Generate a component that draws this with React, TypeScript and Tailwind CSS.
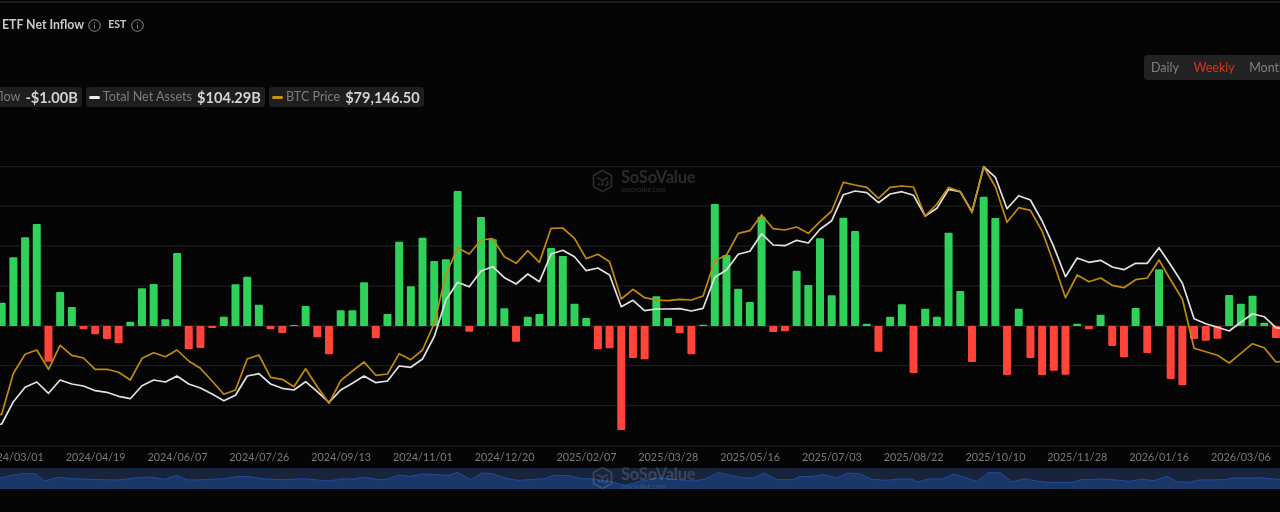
import React from 'react';

// chart values are read in 3x units, measured from the top of the chart (y = 160)
const barEnds = [
  428, 292, 232, 192, 605, 396, 441, 508, 523, 537, 550, 485, 385, 372, 478, 279, 568, 564, 504, 470, 373, 350, 434, 508, 519, 495, 438, 532, 583, 451, 451, 367, 535, 462, 245, 379, 233,
  303, 298, 93, 515, 171, 238, 445, 545, 470, 462, 264, 288, 431, 474, 568, 565, 810, 594, 598, 409, 474, 519, 583, 494, 132, 285, 386, 426, 170, 516, 514, 332, 375, 235, 406, 173, 213,
  491, 575, 470, 433, 639, 446, 470, 218, 393, 606, 110, 174, 645, 446, 594, 645, 632, 644, 491, 508, 464, 558, 592, 444, 579, 328, 657, 676, 537, 542, 536, 405, 431, 407, 488, 534,
];

const gold = [
  763, 640, 583, 570, 628, 556, 586, 594, 628, 628, 637, 660, 595, 578, 590, 570, 603, 625, 663, 703, 690, 597, 585, 652, 658, 680, 626, 680, 730, 662, 633, 606, 646, 642, 581, 599, 570,
  490, 345, 263, 282, 240, 236, 290, 310, 272, 307, 205, 204, 235, 296, 283, 305, 417, 388, 413, 420, 422, 418, 420, 408, 302, 285, 220, 212, 165, 206, 210, 201, 220, 185, 153, 67, 75,
  82, 115, 82, 78, 81, 168, 132, 82, 95, 158, 20, 80, 187, 143, 151, 213, 310, 413, 345, 365, 354, 376, 383, 359, 354, 300, 360, 418, 565, 575, 586, 609, 580, 551, 563, 606,
];

const white = [
  792, 725, 682, 666, 700, 660, 672, 678, 692, 697, 709, 716, 677, 660, 666, 648, 672, 684, 702, 722, 706, 648, 641, 672, 685, 690, 665, 695, 727, 690, 670, 648, 668, 663, 618, 622, 597,
  530, 420, 367, 380, 333, 320, 353, 372, 342, 365, 282, 271, 290, 332, 324, 345, 440, 421, 452, 447, 447, 446, 453, 445, 352, 330, 283, 274, 221, 255, 257, 241, 249, 208, 182, 104, 93,
  98, 128, 102, 95, 106, 168, 145, 88, 95, 155, 20, 52, 146, 107, 120, 183, 260, 350, 294, 307, 301, 321, 329, 310, 310, 263, 315, 370, 476, 491, 502, 513, 487, 461, 470, 503,
];

const barX = (i: number) => 1.7 + 11.69 * i;
// the series carries on past both edges of the picture
const toLine = (vals: number[], before: number, after: number) => {
  const pts = vals.map((v, i) => `${barX(i).toFixed(1)},${(v / 3).toFixed(1)}`);
  return [`-8,${before / 3}`, ...pts, `1288,${after / 3}`].join(' ');
};

const gridLines = [20, 138, 258, 378, 617, 737, 858];

const dates = [
  '2024/03/01', '2024/04/19', '2024/06/07', '2024/07/26', '2024/09/13', '2024/11/01', '2024/12/20', '2025/02/07',
  '2025/03/28', '2025/05/16', '2025/07/03', '2025/08/22', '2025/10/10', '2025/11/28', '2026/01/16', '2026/03/06',
];

// minimap outline: x in px, y in 3x units from y = 440
const mini: [number, number][] = [
  [0, 115], [14, 106], [22, 102], [35, 102], [45, 124], [57, 113], [78, 118], [118, 121], [135, 115], [151, 112], [165, 119], [176, 107], [188, 121], [204, 120], [224, 117], [239, 110], [249, 111], [265, 118], [286, 120], [304, 117], [329, 124], [341, 118], [355, 118], [363, 112], [378, 120], [388, 118], [398, 106], [410, 110], [422, 103], [449, 107], [457, 98], [471, 120], [482, 100], [492, 102], [506, 116], [518, 122], [545, 117], [553, 107], [569, 108], [580, 116], [592, 118], [608, 124], [625, 137], [640, 125],
  [658, 115], [677, 120], [693, 124], [705, 118], [718, 99], [728, 105], [742, 114], [754, 115], [764, 100], [777, 120], [793, 120], [799, 111], [811, 110], [824, 105], [836, 115], [848, 100], [860, 103], [871, 118], [885, 122], [901, 118], [911, 118], [918, 127], [928, 118], [942, 118], [954, 103], [977, 125], [989, 98], [1001, 100], [1012, 127], [1024, 117], [1038, 125], [1048, 128], [1073, 128], [1081, 120], [1105, 118], [1130, 125], [1142, 118], [1154, 123], [1167, 110], [1177, 126], [1189, 128], [1199, 121], [1224, 120], [1236, 114], [1248, 115], [1260, 114], [1280, 120],
];
const miniLine = mini.map(([x, y]) => `${x},${(y - 85) / 3}`).join(' ');

function InfoIcon() {
  return (
    <svg width="13" height="13" viewBox="0 0 13 13" fill="none" stroke="#8a8a8a" strokeWidth="1">
      <circle cx="6.5" cy="6.5" r="5.8" />
      <path d="M6.5 5.6v3.8M6.5 3.4v1" />
    </svg>
  );
}

function Watermark() {
  return (
    <div className="flex items-center gap-[8px] text-white/15">
      <svg width="21" height="24" viewBox="0 0 21 24" fill="none" stroke="currentColor" strokeWidth="1.8">
        <path d="M10.5 1.5l9 5v11l-9 5-9-5v-11z" />
        <path d="M5 8.5l5.500 3 5.500-3M10.500 11.500v5.500M6 14.500l2.500 1.500M15.500 11.500v4l-2.500 1.500" />
      </svg>
      <div className="flex flex-col">
        <span className="text-[16.5px] font-bold leading-[17px] tracking-[-0.2px]">SoSoValue</span>
        <span className="text-[7px] leading-[7px]">sosovalue.com</span>
      </div>
    </div>
  );
}

function LegendChip({ swatch, label, value }: { swatch?: string; label: string; value: string }) {
  return (
    <div className="flex h-[20px] items-center rounded-[3px] bg-[#1e1e1e] pl-[3px] pr-[4px] pt-[1px]">
      {swatch && <span className={`mr-[3px] h-[3px] w-[11px] rounded-full ${swatch}`} />}
      <span className="text-[12.6px] text-[#7d7d7d]">{label}</span>
      <span className="ml-[5px] text-[14.6px] font-bold text-[#d4d4d4]">{value}</span>
    </div>
  );
}

export default function App() {
  return (
    <div className="relative flex h-[512px] w-[1280px] flex-col overflow-hidden bg-[#050505] blur-[0.5px] font-['Lato','Liberation_Sans',sans-serif]">
      <div className="mt-[1px] h-[2px] w-full bg-[#1c1c1c]" />

      {/* Title */}
      <div className="mt-[14px] flex h-[16px] items-center pl-[2px]">
        <span className="text-[12.3px] font-bold text-[#c9c9c9]">ETF Net Inflow</span>
        <span className="ml-[4px]"><InfoIcon /></span>
        <span className="ml-[7px] text-[10.5px] font-bold text-[#c9c9c9]">EST</span>
        <span className="ml-[5px]"><InfoIcon /></span>
      </div>

      {/* Period tabs */}
      <div className="mt-[22px] flex h-[25px] justify-end">
        <div className="flex w-[136px] items-center gap-[14.5px] overflow-hidden whitespace-nowrap rounded-l-[4px] bg-[#222222] pl-[7px] pt-[2px] text-[12.500px] text-[#808080]">
          <span>Daily</span>
          <span className="text-[#d8341f]">Weekly</span>
          <span>Monthly</span>
        </div>
      </div>

      {/* Legend */}
      <div className="mt-[7px] ml-[-71px] flex h-[20px] gap-[4px] whitespace-nowrap">
        <LegendChip label="Total Net Inflow" value="-$1.00B" />
        <LegendChip swatch="bg-[#eeeeee]" label="Total Net Assets" value="$104.29B" />
        <LegendChip swatch="bg-[#c98f10]" label="BTC Price" value="$79,146.50" />
      </div>

      {/* Chart */}
      <div className="relative mt-[53px] h-[290px] w-full">
        <svg width="1280" height="290" viewBox="0 0 1280 290" className="block">
          {gridLines.map((y) => (
            <line key={y} x1="0" x2="1280" y1={y / 3} y2={y / 3} stroke="#222222" strokeWidth="1" />
          ))}
          <line x1="0" x2="1280" y1="166" y2="166" stroke="#3a3a3a" strokeWidth="1" />
          {barEnds.map((end, i) => {
            const up = end < 498;
            const top = up ? end / 3 : 166;
            const h = Math.abs(end - 498) / 3;
            return <rect key={i} x={barX(i) - 4} y={top} width="8" height={h} rx="1" fill={up ? '#30d158' : '#ff453a'} />;
          })}
          <polyline points={toLine(white, 800, 506)} fill="none" stroke="#e2e2e2" strokeWidth="1.7" strokeLinejoin="round" />
          <polyline points={toLine(gold, 770, 602)} fill="none" stroke="#c08a10" strokeWidth="1.7" strokeLinejoin="round" />
        </svg>
        <div className="absolute left-[592px] top-[9px]"><Watermark /></div>
      </div>

      {/* Dates */}
      <div className="ml-[-27px] flex h-[14px] items-center pt-[1px] text-[10.8px] text-[#7a7a7a]">
        {dates.map((d) => (
          <span key={d} className="w-[81.8px] shrink-0 text-center">{d}</span>
        ))}
      </div>

      {/* Minimap */}
      <div className="relative mt-[4px] h-[21px] w-full bg-[#18243c]">
        <svg width="1280" height="21" viewBox="0 0 1280 21" className="block">
          <polygon points={`0,21 ${miniLine} 1280,21`} fill="#1a3768" />
          <polyline points={miniLine} fill="none" stroke="#1f4b9c" strokeWidth="1" />
        </svg>
        <div className="absolute left-[592px] top-[-2px]"><Watermark /></div>
      </div>
    </div>
  );
}
